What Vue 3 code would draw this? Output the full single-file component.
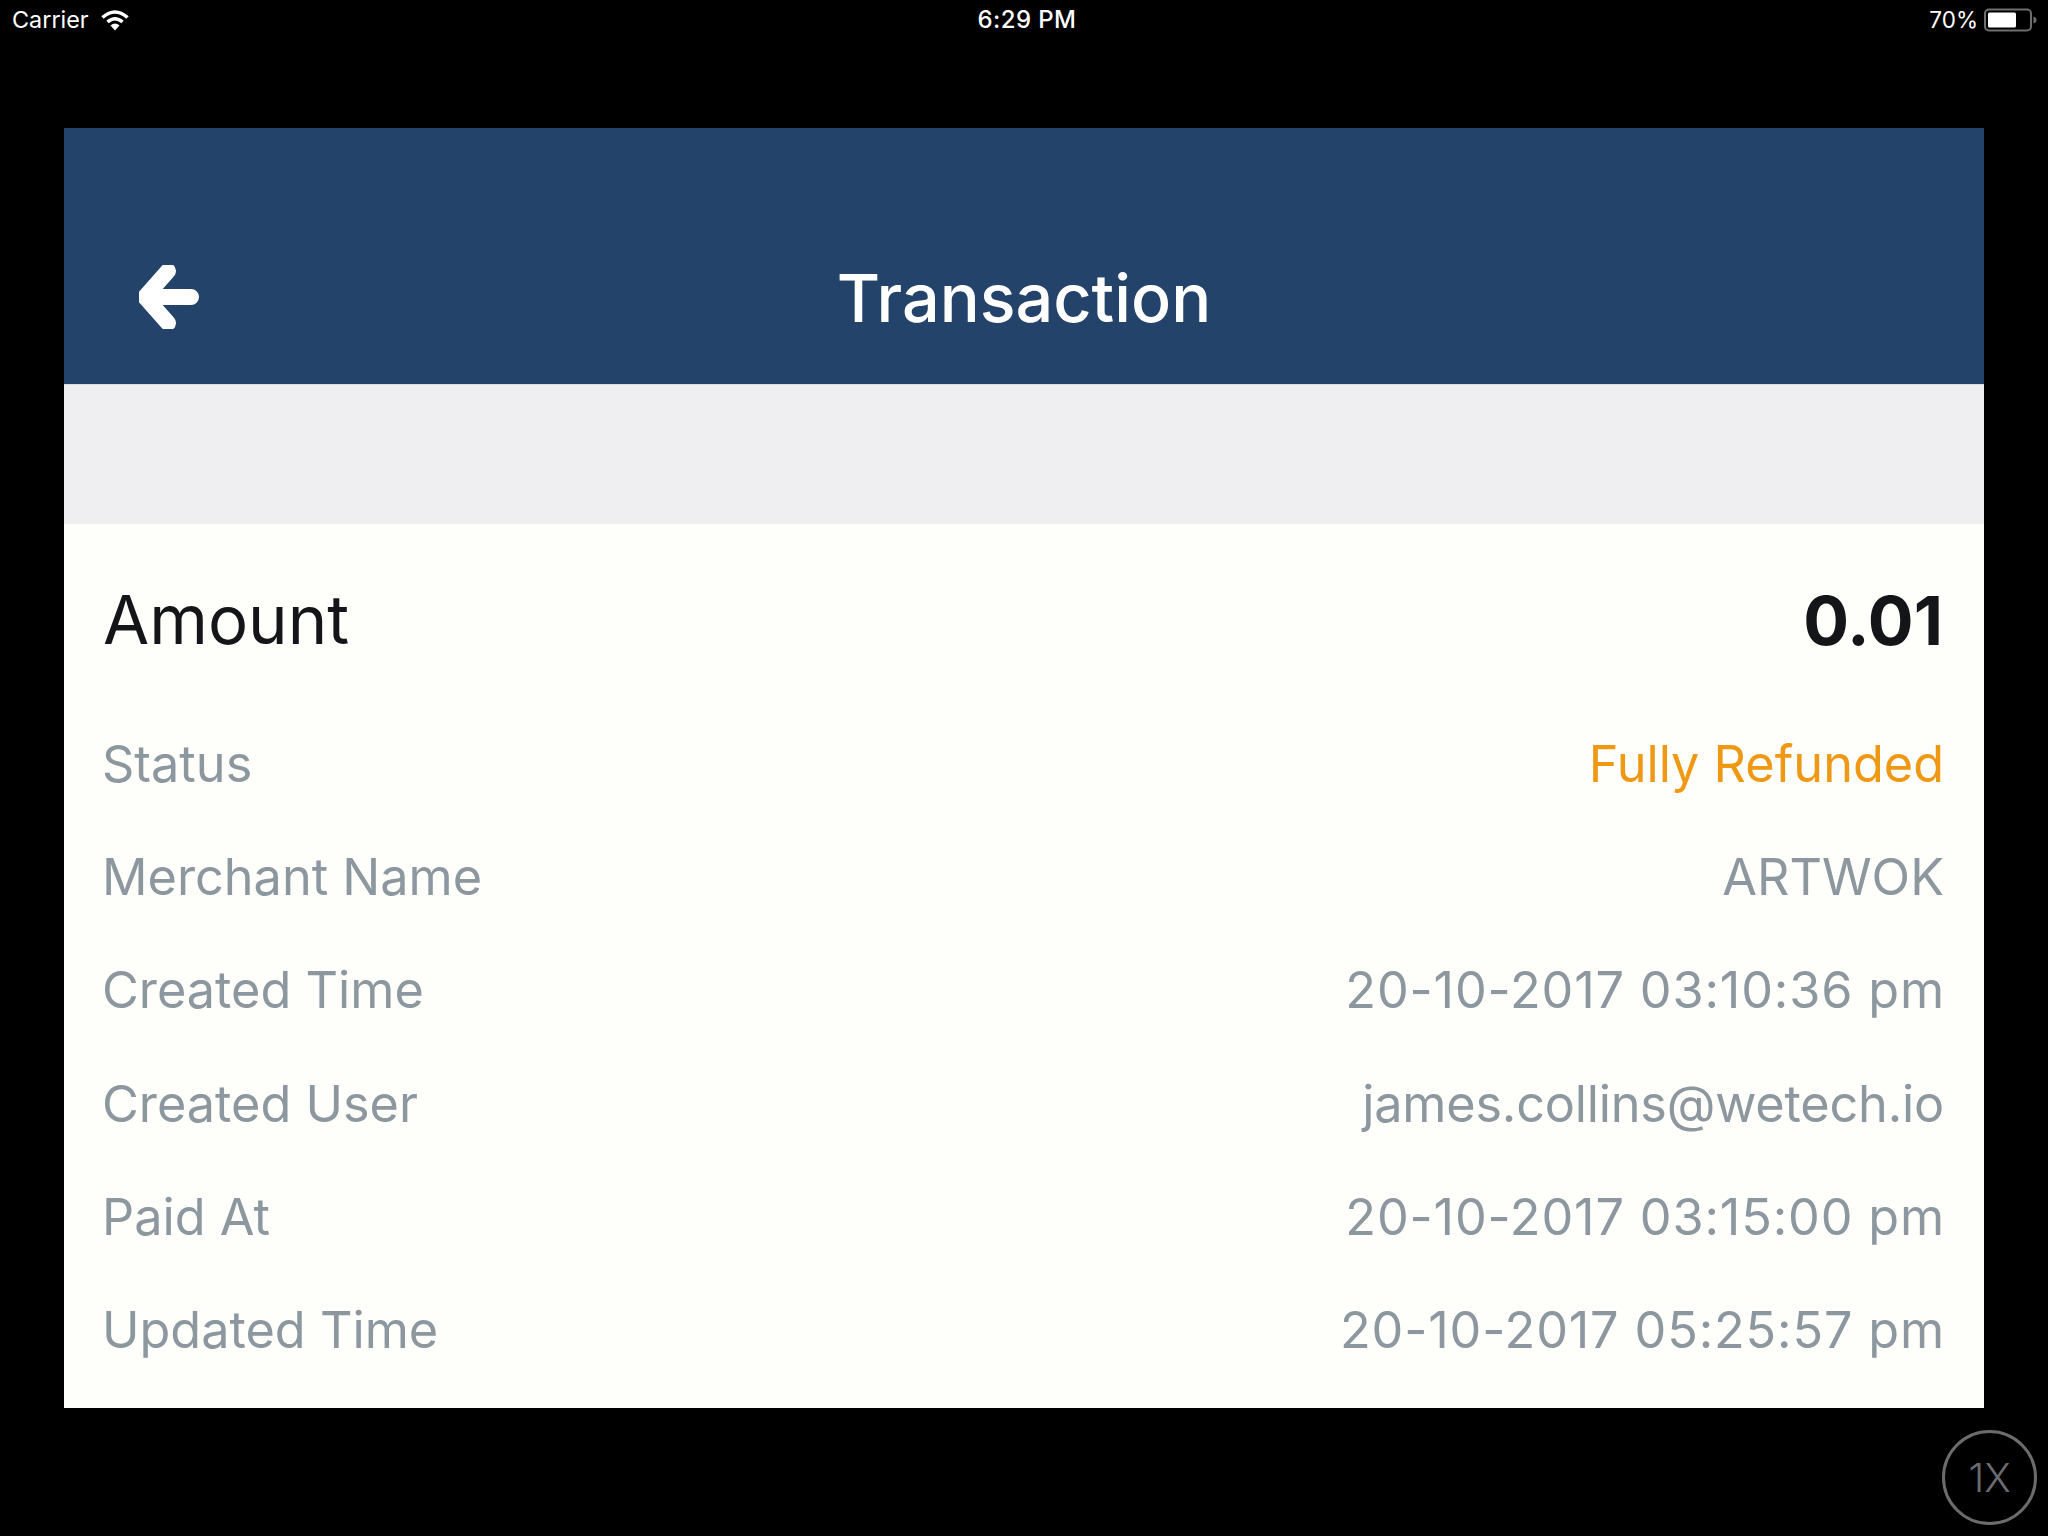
<script setup>
const rows = [
  { label: 'Status', value: 'Fully Refunded', cls: 'orange' },
  { label: 'Merchant Name', value: 'ARTWOK', cls: '' },
  { label: 'Created Time', value: '20-10-2017 03:10:36 pm', cls: 'date' },
  { label: 'Created User', value: 'james.collins@wetech.io', cls: 'mail' },
  { label: 'Paid At', value: '20-10-2017 03:15:00 pm', cls: 'date' },
  { label: 'Updated Time', value: '20-10-2017 05:25:57 pm', cls: 'date' }
]
</script>

<template>
  <div class="screen">
    <div class="status">
      <div class="s-left">
        <span>Carrier</span>
        <svg class="wifi" width="30" height="22" viewBox="0 0 30 22">
          <path d="M2.5 8.5 Q15 -2.5 27.5 8.5" fill="none" stroke="#fff" stroke-width="3.6"/>
          <path d="M7.5 13 Q15 6.5 22.5 13" fill="none" stroke="#fff" stroke-width="3.6"/>
          <path d="M10.5 16.5 Q15 12.5 19.5 16.5 L15 21.5 Z" fill="#fff"/>
        </svg>
      </div>
      <div class="s-center">6:29 PM</div>
      <div class="s-right">
        <span>70%</span>
        <svg class="batt" width="54" height="24" viewBox="0 0 54 24">
          <rect x="1" y="1.5" width="46" height="21" rx="4" fill="none" stroke="#6e6e6e" stroke-width="2"/>
          <rect x="4" y="4.5" width="28" height="15" rx="1.5" fill="#fff"/>
          <path d="M49.5 8.5 Q52.5 9.5 52.5 12 Q52.5 14.5 49.5 15.5 Z" fill="#6e6e6e"/>
        </svg>
      </div>
    </div>

    <div class="card">
      <header class="head">
        <svg class="back" width="60" height="64" viewBox="0 0 60 64">
          <path d="M29 6 L6 32 L29 58 M6 32 H52" fill="none" stroke="#fff" stroke-width="16" stroke-linecap="round" stroke-linejoin="round"/>
        </svg>
        <h1 class="title">Transaction</h1>
      </header>
      <div class="band"></div>
      <div class="body">
        <div class="amount">
          <span class="a-label">Amount</span>
          <strong>0.01</strong>
        </div>
        <div v-for="r in rows" :key="r.label" class="row">
          <span>{{ r.label }}</span>
          <span :class="r.cls">{{ r.value }}</span>
        </div>
      </div>
    </div>

    <div class="zoom">1X</div>
  </div>
</template>

<style>
html, body { margin: 0; background: #000; }
</style>

<style scoped>
.screen {
  position: relative;
  width: 2048px;
  height: 1536px;
  background: #000;
  font-family: Inter, "Liberation Sans", sans-serif;
  overflow: hidden;
}
.status {
  height: 128px;
  box-sizing: border-box;
  padding: 6px 10px 0 12px;
  display: grid;
  grid-template-columns: 1fr auto 1fr;
  align-items: start;
  color: #fff;
  font-size: 23.4px;
  line-height: 28px;
}
.s-left { display: flex; align-items: flex-start; gap: 12px; }
.wifi { margin-top: 3px; margin-left: -1px; }
.s-center { font-size: 24px; letter-spacing: 0.4px; font-weight: 500; padding-left: 4px; }
.s-right { display: flex; justify-content: flex-end; gap: 6px; font-size: 22.5px; }
.batt { margin-top: 2px; }
.card {
  margin: 0 64px;
  width: 1920px;
  height: 1280px;
  display: flex;
  flex-direction: column;
}
.head {
  position: relative;
  height: 256px;
  flex: none;
  background: #23436a;
  display: flex;
  align-items: flex-end;
  justify-content: center;
  box-shadow: 0 1px 0 #dcdcde;
}
.title {
  margin: 0 0 46px;
  color: #fff;
  font-size: 66.5px;
  line-height: 80px;
  font-weight: 500;
}
.back { position: absolute; left: 75px; bottom: 55px; }
.band { height: 140px; flex: none; background: #efeff1; }
.body {
  flex: 1;
  background: #fefffb;
  padding: 54px 40px 0 38px;
}
.amount {
  display: flex;
  justify-content: space-between;
  height: 84px;
  line-height: 84px;
  font-size: 67px;
  color: #141518;
  margin-bottom: 44.5px;
}
.a-label { margin-left: 1px; }
.amount strong { font-weight: 700; font-size: 68px; margin-right: 1px; }
.row {
  display: flex;
  justify-content: space-between;
  height: 113.4px;
  line-height: 113.4px;
  font-size: 50.4px;
  color: #8c979f;
}
.orange { color: #ef9813; }
.date { letter-spacing: 0.85px; margin-right: -1px; }
.mail { letter-spacing: -0.2px; }
.zoom {
  position: absolute;
  left: 1942px;
  top: 1430px;
  width: 95px;
  height: 95px;
  box-sizing: border-box;
  border: 3px solid #6c6c6f;
  border-radius: 50%;
  color: #6c6c6f;
  font-size: 40px;
  font-weight: 300;
  display: flex;
  align-items: center;
  justify-content: center;
}
</style>
